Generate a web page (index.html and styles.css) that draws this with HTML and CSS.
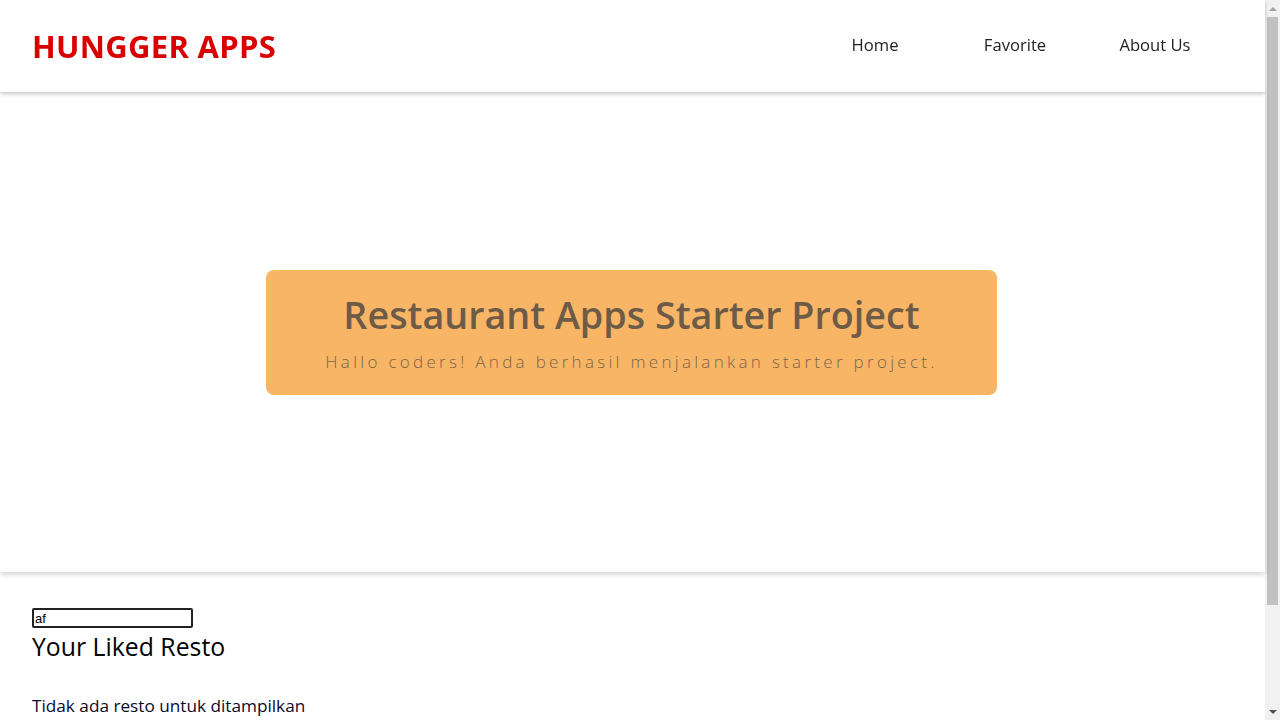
FILE: index.html
```html
<!DOCTYPE html>
<html lang="id">
<head>
<meta charset="utf-8">
<title>Hungger Apps</title>
<link rel="stylesheet" href="styles.css">
</head>
<body>
<div class="page">
  <header class="app-bar">
    <h1 class="app-bar__brand">HUNGGER APPS</h1>
    <nav class="nav">
      <ul class="nav__list">
        <li class="nav__item"><a href="#">Home</a></li>
        <li class="nav__item"><a href="#">Favorite</a></li>
        <li class="nav__item"><a href="#">About Us</a></li>
      </ul>
    </nav>
  </header>
  <section class="hero">
    <div class="hero__inner">
      <h2 class="hero__title">Restaurant Apps Starter Project</h2>
      <p class="hero__tagline">Hallo coders! Anda berhasil menjalankan starter project.</p>
    </div>
  </section>
  <main class="content">
    <input class="search" type="text" value="af">
    <h2 class="content__heading">Your Liked Resto</h2>
    <div class="restos">
      <p class="restos__empty">Tidak ada resto untuk ditampilkan</p>
    </div>
  </main>
</div>
<div class="scrollbar" aria-hidden="true">
  <span class="scrollbar__arrow scrollbar__arrow--up"></span>
  <span class="scrollbar__thumb"></span>
  <span class="scrollbar__arrow scrollbar__arrow--down"></span>
</div>
</body>
</html>
```
FILE: styles.css
```css
* { box-sizing: border-box; }
html, body { margin: 0; padding: 0; }
body {
  font-family: "Open Sans", "Noto Sans", sans-serif;
  color: #000;
  background: #fff;
}
.page {
  margin-right: 15px;
}
.app-bar {
  height: 92px;
  display: flex;
  align-items: center;
  justify-content: space-between;
  padding: 0 40px 0 32px;
  background: #fff;
  box-shadow: 0 2px 4px rgba(0,0,0,0.22);
  position: relative;
  z-index: 2;
}
.app-bar__brand {
  margin: 0;
  font-size: 31px;
  font-weight: 700;
  color: #d90000;
  letter-spacing: 0.3px;
  line-height: 1;
  padding-top: 1px;
}
.nav {
  padding-bottom: 3px;
}
.nav__list {
  list-style: none;
  margin: 0;
  padding: 0;
  display: flex;
}
.nav__item {
  width: 140px;
  text-align: center;
}
.nav__item a {
  font-size: 16.6px;
  color: #222;
  text-decoration: none;
}
.hero {
  height: 480px;
  display: flex;
  align-items: center;
  justify-content: center;
  background: #fff;
  box-shadow: 0 2px 6px rgba(0,0,0,0.2);
  position: relative;
  z-index: 1;
}
.hero__inner {
  width: 731px;
  height: 125px;
  background: #f8b566;
  border-radius: 8px;
  text-align: center;
  padding-top: 21px;
  margin-left: -2px;
}
.hero__title {
  margin: 0;
  font-size: 37.7px;
  font-weight: 600;
  color: #6d5b47;
  line-height: 48px;
}
.hero__tagline {
  margin: 11px 0 0;
  font-size: 17px;
  font-weight: 300;
  letter-spacing: 3.3px;
  color: #7a6649;
}
.content {
  padding: 36px 32px 0;
  min-height: 268px;
}
.search {
  display: block;
  width: 161px;
  height: 20px;
  margin: 0;
  padding: 0 1px;
  border: 2px solid #222;
  border-radius: 2px;
  font-family: "Liberation Sans", Arial, sans-serif;
  font-size: 13px;
  color: #000;
}
.content__heading {
  margin: 0;
  font-size: 24.8px;
  font-weight: 400;
  line-height: 36px;
}
.restos {
  padding-top: 30px;
}
.restos__empty {
  margin: 0;
  font-size: 17.2px;
  line-height: 24px;
  color: #0a0a2a;
}
.scrollbar {
  position: fixed;
  top: 0;
  right: 0;
  width: 15px;
  height: 100vh;
  background: #f1f1f1;
  display: flex;
  flex-direction: column;
  align-items: center;
}
.scrollbar__arrow {
  flex: 0 0 17px;
  width: 15px;
  display: flex;
  align-items: center;
  justify-content: center;
}
.scrollbar__arrow::before {
  content: "";
  width: 0;
  height: 0;
  border-left: 4px solid transparent;
  border-right: 4px solid transparent;
}
.scrollbar__arrow--up::before {
  border-bottom: 4px solid #a3a3a3;
}
.scrollbar__arrow--down {
  margin-top: auto;
}
.scrollbar__arrow--down::before {
  border-top: 4px solid #505050;
}
.scrollbar__thumb {
  width: 11px;
  height: 588px;
  background: #c1c1c1;
}
```
